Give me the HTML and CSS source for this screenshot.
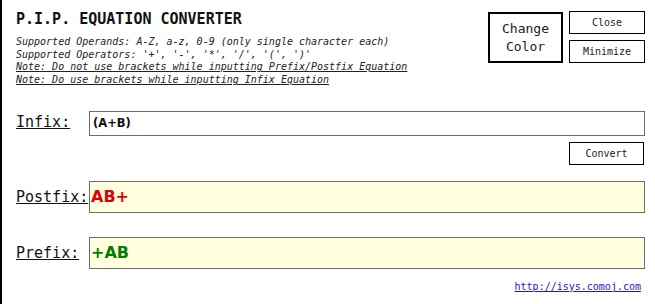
FILE: index.html
```html
<!doctype HTML>
<html>
<head>
  <link rel="stylesheet" href="styles.css">
</head>
<body>
  <div class="window">
    <div class="header">
      <div class="info">
        <div class="title">P.I.P. EQUATION CONVERTER</div>
        <div class="notes">
          <div>Supported Operands: A-Z, a-z, 0-9 (only single character each)</div>
          <div>Supported Operators: '+', '-', '*', '/', '(', ')'</div>
          <div class="note">Note: Do not use brackets while inputting Prefix/Postfix Equation</div>
          <div class="note">Note: Do use brackets while inputting Infix Equation</div>
        </div>
      </div>
      <div class="controls">
        <button class="color-btn">Change<br>Color</button>
        <div class="win-btns">
          <button class="small-btn">Close</button>
          <button class="small-btn">Minimize</button>
        </div>
      </div>
    </div>

    <div class="row infix-row">
      <label class="field-label" for="infix">Infix:</label>
      <input class="field infix" id="infix" type="text" value="(A+B)"/>
    </div>
    <div class="convert-row">
      <button class="small-btn">Convert</button>
    </div>
    <div class="row postfix-row">
      <label class="field-label" for="postfix">Postfix:</label>
      <input class="field result postfix" id="postfix" type="text" value="AB+" readonly/>
    </div>
    <div class="row prefix-row">
      <label class="field-label" for="prefix">Prefix:</label>
      <input class="field result prefix" id="prefix" type="text" value="+AB" readonly/>
    </div>
    <div class="footer">
      <a href="http://isys.comoj.com">http://isys.comoj.com</a>
    </div>
  </div>
</body>
</html>
```

FILE: styles.css
```css
* {
  box-sizing: border-box;
}
body {
  margin: 0;
  background: #fff;
  color: #111;
  font-family: "DejaVu Sans Mono", monospace;
}
.window {
  height: 304px;
  border-left: 2px solid #000;
  padding: 10px 10px 0 14px;
}
.header {
  display: flex;
  justify-content: space-between;
  align-items: flex-start;
}
.title {
  font-size: 15px;
  font-weight: bold;
  line-height: 18px;
}
.notes {
  margin-top: 8px;
  font-size: 10px;
  font-style: italic;
  line-height: 12.7px;
  color: #222;
}
.note {
  text-decoration: underline;
}
.controls {
  display: flex;
  gap: 6px;
  margin-top: 1px;
}
button {
  font-family: "DejaVu Sans Mono", monospace;
  background: #fff;
  color: #222;
  padding: 0;
  cursor: pointer;
}
.color-btn {
  width: 75px;
  height: 51px;
  margin-top: 1px;
  border: 2px solid #000;
  font-size: 13px;
  line-height: 18px;
}
.win-btns {
  display: flex;
  flex-direction: column;
  gap: 6px;
}
.small-btn {
  width: 76px;
  height: 23px;
  border: 1px solid #000;
  font-size: 10px;
}
.row {
  display: flex;
  align-items: baseline;
}
.field-label {
  flex: 0 0 73px;
  font-size: 15px;
  line-height: 18px;
  text-decoration: underline;
  color: #111;
}
.field {
  flex: 1;
  border: 1px solid #6d6d6d;
  padding: 0 3px;
  font-family: "DejaVu Sans", sans-serif;
  font-weight: bold;
  outline: none;
}
.infix-row {
  margin-top: 24px;
}
.infix {
  height: 25px;
  font-size: 11.5px;
  color: #111;
  background: #fff;
}
.convert-row {
  display: flex;
  justify-content: flex-end;
  margin-top: 6px;
  padding-right: 1px;
}
.convert-row .small-btn {
  width: 75px;
}
.result {
  height: 32px;
  font-size: 16px;
  padding: 0 1px;
  background: #ffffe0;
}
.postfix-row {
  margin-top: 16px;
}
.postfix {
  color: #e00000;
}
.prefix-row {
  margin-top: 24px;
}
.prefix {
  color: #008000;
}
.footer {
  display: flex;
  justify-content: flex-end;
  margin-top: 12px;
  padding-right: 4px;
  font-size: 10px;
  line-height: 12px;
}
.footer a {
  color: #1a1ac8;
}
```
